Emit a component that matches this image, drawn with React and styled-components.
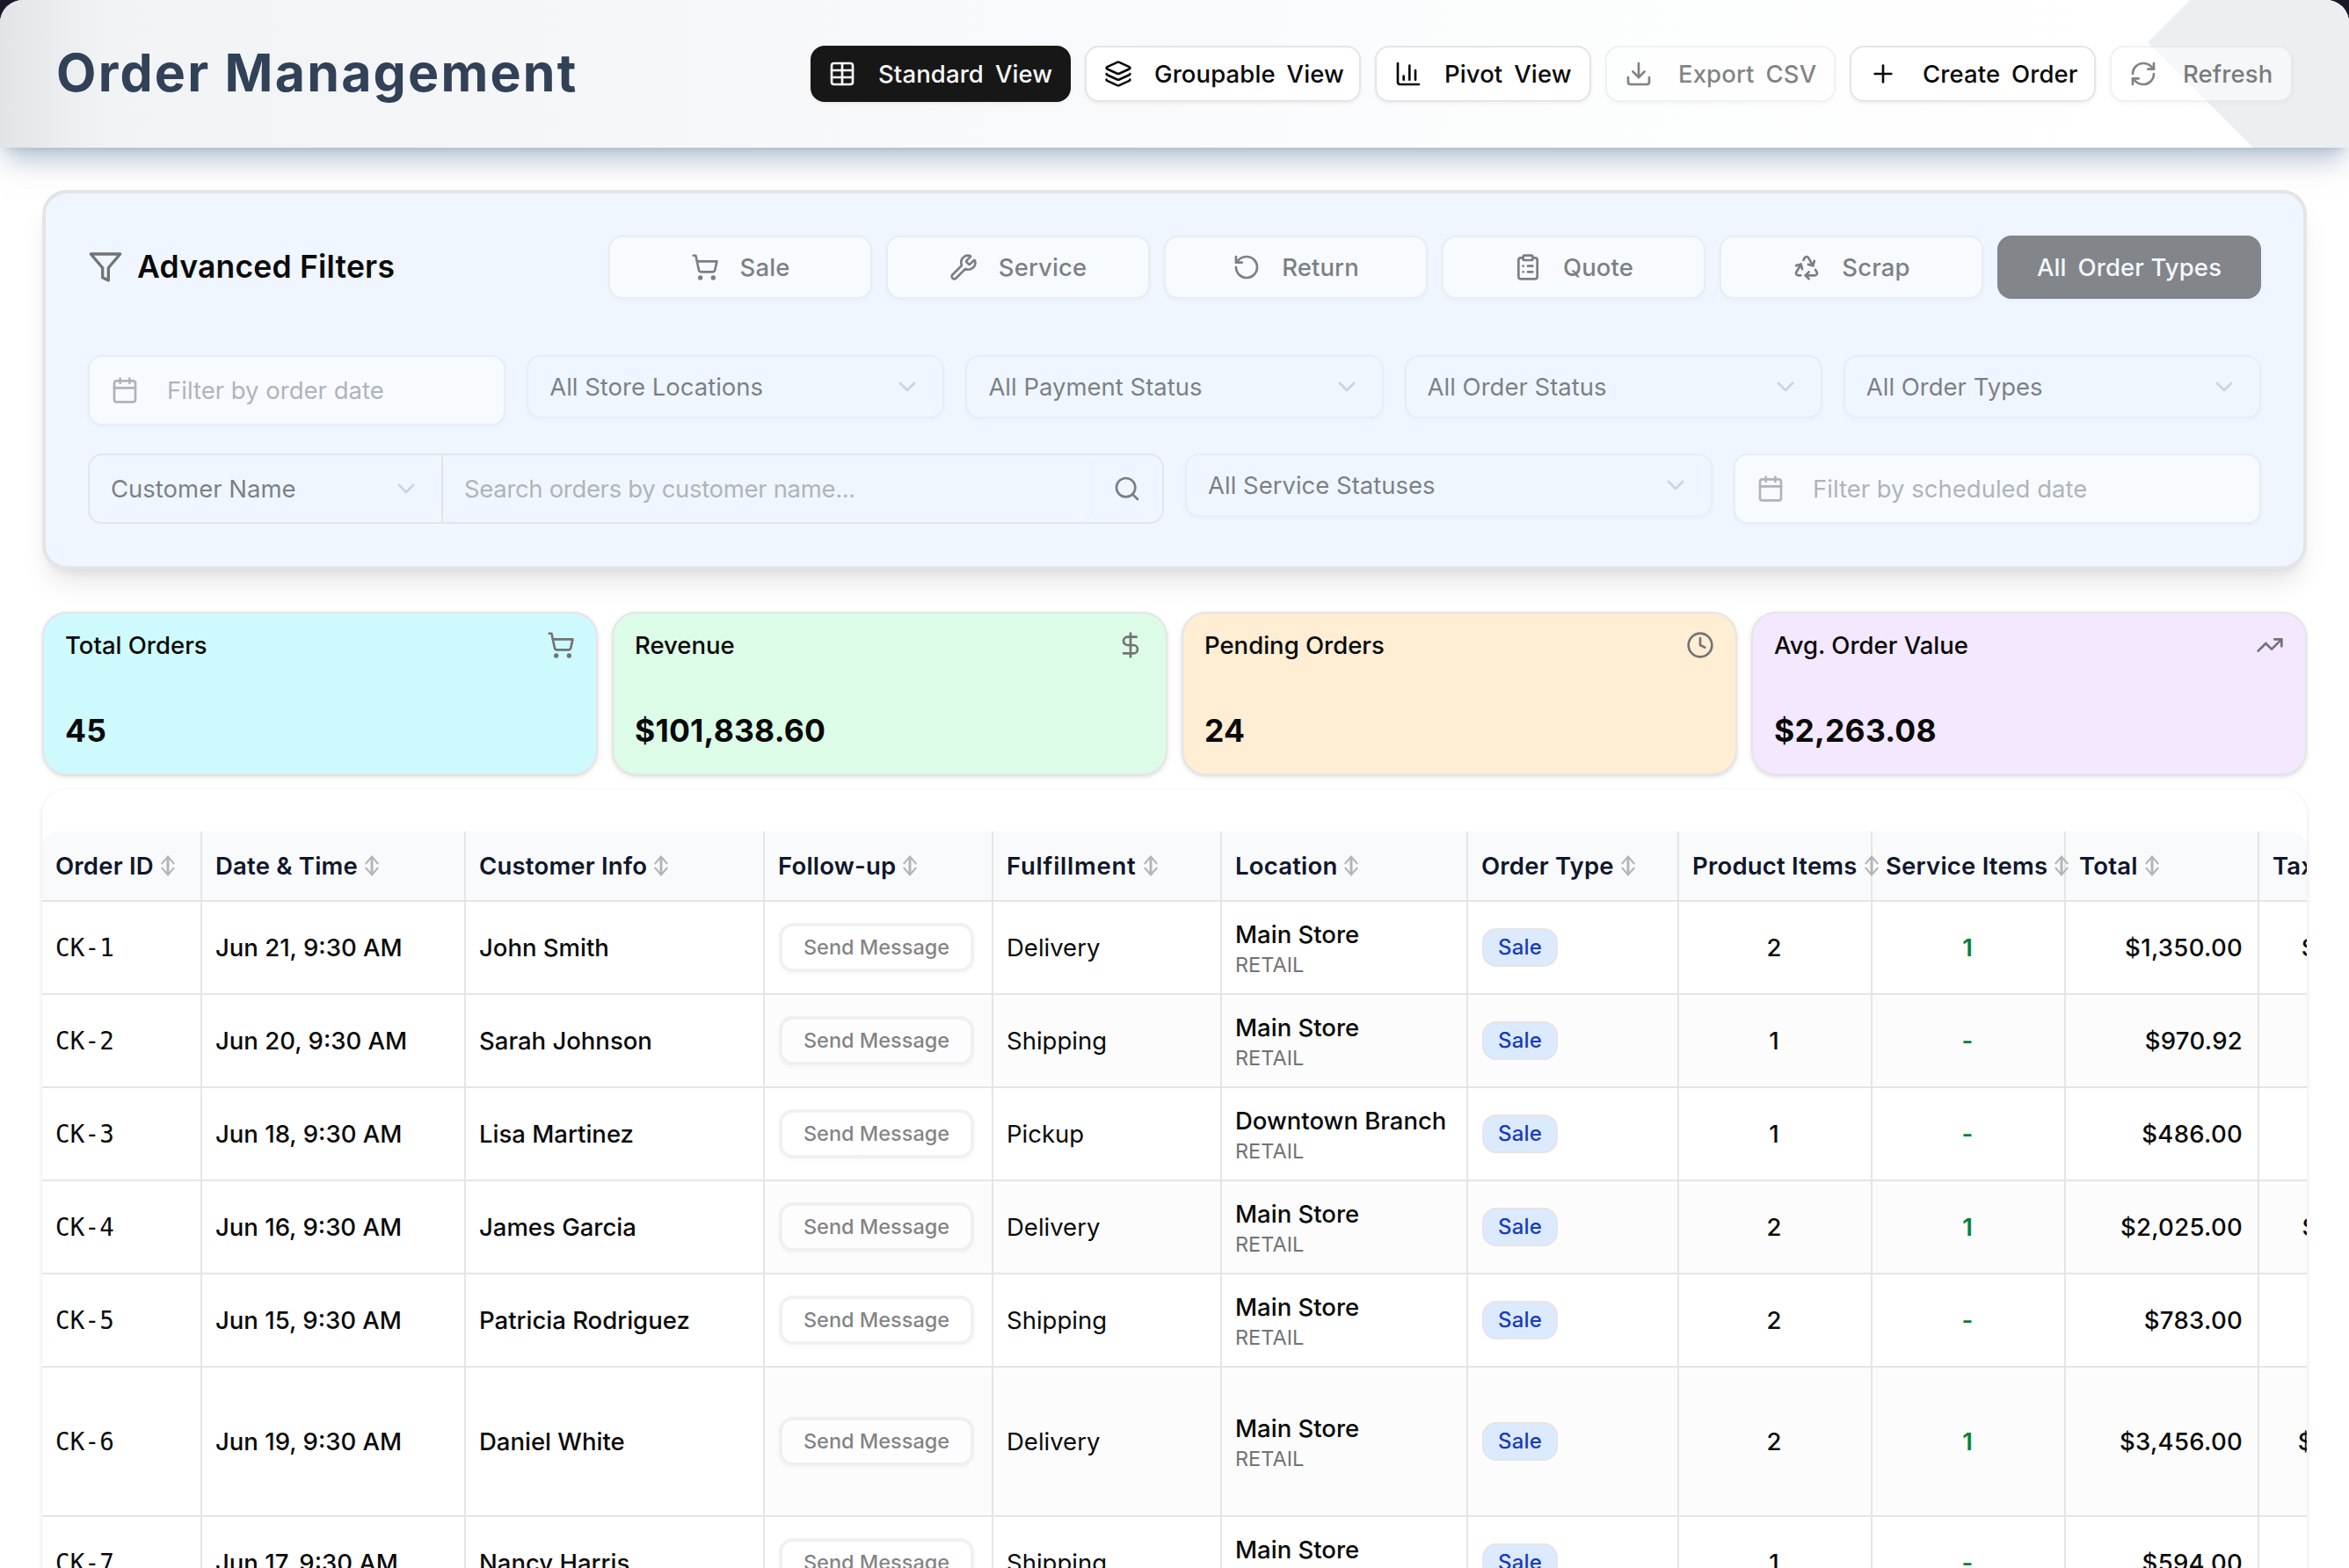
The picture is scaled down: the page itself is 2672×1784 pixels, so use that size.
import React from "react";
import styled, {createGlobalStyle, css} from "styled-components";
import {
    Table, Layers, ChartColumn, Download, Plus, RefreshCw, ShoppingCart, Wrench, RotateCcw,
    ClipboardList, Recycle, Calendar, ChevronDown, Search, DollarSign, Clock, TrendingUp
} from "lucide-react";

const viewButtons = [
    {label: 'Standard View', icon: Table, width: 296, gap: 25, active: true},
    {label: 'Groupable View', icon: Layers, width: 314, gap: 25},
    {label: 'Pivot View', icon: ChartColumn, width: 246, gap: 25},
    {label: 'Export CSV', icon: Download, width: 262, gap: 29, disabled: true},
    {label: 'Create Order', icon: Plus, width: 280, gap: 29},
    {label: 'Refresh', icon: RefreshCw, width: 208, gap: 29, disabled: true},
]

const orderTypes = [
    {label: 'Sale', icon: ShoppingCart},
    {label: 'Service', icon: Wrench},
    {label: 'Return', icon: RotateCcw},
    {label: 'Quote', icon: ClipboardList},
    {label: 'Scrap', icon: Recycle},
]

const selects = ['All Store Locations', 'All Payment Status', 'All Order Status', 'All Order Types']

const stats = [
    {label: 'Total Orders', value: '45', icon: ShoppingCart, color: '#cefafe'},
    {label: 'Revenue', value: '$101,838.60', icon: DollarSign, color: '#dcfce7'},
    {label: 'Pending Orders', value: '24', icon: Clock, color: '#ffedd4'},
    {label: 'Avg. Order Value', value: '$2,263.08', icon: TrendingUp, color: '#f3e8ff'},
]

const columns = [
    {name: 'Order ID'},
    {name: 'Date & Time'},
    {name: 'Customer Info'},
    {name: 'Follow-up'},
    {name: 'Fulfillment', tracking: 0.75},
    {name: 'Location'},
    {name: 'Order Type'},
    {name: 'Product Items'},
    {name: 'Service Items'},
    {name: 'Total'},
    {name: 'Tax'},
]

const orders = [
    {id: 'CK-1', date: 'Jun 21, 9:30 AM', customer: 'John Smith', fulfillment: 'Delivery', store: 'Main Store', products: 2, services: 1, total: '$1,350.00', tax: '$100.00'},
    {id: 'CK-2', date: 'Jun 20, 9:30 AM', customer: 'Sarah Johnson', fulfillment: 'Shipping', store: 'Main Store', products: 1, services: '-', total: '$970.92', tax: '$71.92'},
    {id: 'CK-3', date: 'Jun 18, 9:30 AM', customer: 'Lisa Martinez', fulfillment: 'Pickup', store: 'Downtown Branch', products: 1, services: '-', total: '$486.00', tax: '$36.00'},
    {id: 'CK-4', date: 'Jun 16, 9:30 AM', customer: 'James Garcia', fulfillment: 'Delivery', store: 'Main Store', products: 2, services: 1, total: '$2,025.00', tax: '$150.00'},
    {id: 'CK-5', date: 'Jun 15, 9:30 AM', customer: 'Patricia Rodriguez', fulfillment: 'Shipping', store: 'Main Store', products: 2, services: '-', total: '$783.00', tax: '$58.00'},
    {id: 'CK-6', date: 'Jun 19, 9:30 AM', customer: 'Daniel White', fulfillment: 'Delivery', store: 'Main Store', products: 2, services: 1, total: '$3,456.00', tax: '$256.00', tall: true},
    {id: 'CK-7', date: 'Jun 17, 9:30 AM', customer: 'Nancy Harris', fulfillment: 'Shipping', store: 'Main Store', products: 1, services: '-', total: '$594.00', tax: '$44.00'},
]

function FunnelIcon() {
    return (
        <svg width="40" height="40" viewBox="0 0 24 24" fill="none" stroke="#737373" strokeWidth="2"
             strokeLinecap="round" strokeLinejoin="round">
            <polygon points="22 3 2 3 10 12.46 10 19 14 21 14 12.46 22 3"/>
        </svg>
    )
}

function SortIcon() {
    return (
        <svg width="16" height="24" viewBox="0 0 16 24" fill="none" stroke="#b4b5b6">
            <path d="M8 2V22" strokeWidth="3"/>
            <path d="M0.8 10L8 1.6L15.2 10M0.8 14L8 22.4L15.2 14" strokeWidth="2"/>
        </svg>
    )
}

function DateFilter({label}) {
    return (
        <DateButton>
            <Calendar size={32}/>
            <span>{label}</span>
        </DateButton>
    )
}

function SelectFilter({label}) {
    return (
        <Select>
            <span>{label}</span>
            <ChevronDown size={32}/>
        </Select>
    )
}

export default function App() {
    return (
        <Page>
            <GlobalStyle/>
            <Window>
                <Header>
                    <h1>Order Management</h1>
                    <Toolbar>
                        {viewButtons.map(({label, icon: Icon, width, gap, active, disabled}) => (
                            <ViewButton key={label} $width={width} $gap={gap} $active={active} disabled={disabled}>
                                <Icon size={32}/>
                                <span>{label}</span>
                            </ViewButton>
                        ))}
                    </Toolbar>
                </Header>
                <Content>
                    <Filters>
                        <FiltersTop>
                            <FiltersTitle>
                                <FunnelIcon/>
                                <h2>Advanced Filters</h2>
                            </FiltersTitle>
                            <TypeButtons>
                                {orderTypes.map(({label, icon: Icon}) => (
                                    <TypeButton key={label}>
                                        <Icon size={32}/>
                                        <span>{label}</span>
                                    </TypeButton>
                                ))}
                                <TypeButton $active>
                                    <AllTypes><span>All</span><span>Order Types</span></AllTypes>
                                </TypeButton>
                            </TypeButtons>
                        </FiltersTop>
                        <FilterGrid $columns={5}>
                            <DateFilter label="Filter by order date"/>
                            {selects.map(label => <SelectFilter key={label} label={label}/>)}
                        </FilterGrid>
                        <FilterGrid $columns={4}>
                            <SearchGroup>
                                <SearchField>
                                    <span>Customer Name</span>
                                    <ChevronDown size={32}/>
                                </SearchField>
                                <SearchInput>Search orders by customer name...</SearchInput>
                                <SearchButton><Search size={32}/></SearchButton>
                            </SearchGroup>
                            <SelectFilter label="All Service Statuses"/>
                            <DateFilter label="Filter by scheduled date"/>
                        </FilterGrid>
                    </Filters>

                    <Stats>
                        {stats.map(({label, value, icon: Icon, color}) => (
                            <StatCard key={label} $color={color}>
                                <div>
                                    <h4>{label}</h4>
                                    <Icon size={32}/>
                                </div>
                                <p>{value}</p>
                            </StatCard>
                        ))}
                    </Stats>

                    <TableCard>
                        <TableScroll>
                            <HeadRow>
                                {columns.map(({name, tracking}) => (
                                    <HeadCell key={name} $tracking={tracking}>
                                        <span>{name}</span>
                                        <SortIcon/>
                                    </HeadCell>
                                ))}
                            </HeadRow>
                            {orders.map((order, i) => (
                                <Row key={order.id} $striped={i % 2 === 1} $tall={order.tall}>
                                    <Cell $pinned><OrderId>{order.id}</OrderId></Cell>
                                    <Cell $pinned $medium>{order.date}</Cell>
                                    <Cell $pinned $medium>{order.customer}</Cell>
                                    <Cell><MessageButton>Send Message</MessageButton></Cell>
                                    <Cell>{order.fulfillment}</Cell>
                                    <Cell>
                                        <Location>
                                            <h5>{order.store}</h5>
                                            <p>RETAIL</p>
                                        </Location>
                                    </Cell>
                                    <Cell><Badge>Sale</Badge></Cell>
                                    <Cell $medium $align="center">{order.products}</Cell>
                                    <ServiceCell $align="center">{order.services}</ServiceCell>
                                    <AmountCell $medium $align="flex-end">{order.total}</AmountCell>
                                    <AmountCell $medium $align="flex-end">{order.tax}</AmountCell>
                                </Row>
                            ))}
                        </TableScroll>
                    </TableCard>
                </Content>
            </Window>
        </Page>
    );
}

const colors = {
    text: '#0a0a0a', muted: '#737373', border: '#e5e5e5', slate: '#314158', blue: '#eff6ff',
}

const GlobalStyle = createGlobalStyle`
  * {
    box-sizing: border-box;
  }

  body {
    margin: 0;
    background: #1a1828;
  }

  h1, h2, h4, h5, p {
    margin: 0;
  }

  button {
    font: inherit;
    letter-spacing: inherit;
    color: inherit;
    padding: 0;
  }

  svg {
    flex-shrink: 0;
  }
`

const Page = styled.div`
  height: 1784px;
  overflow: hidden;
  font-family: Inter, "Liberation Sans", sans-serif;
  font-size: 27.5px;
  line-height: 40px;
  letter-spacing: 0;
  color: ${colors.text};
  white-space: nowrap;
`

const Window = styled.div`
  height: 100%;
  background: #fff;
  border-radius: 26px 26px 0 0;
  overflow: hidden;
`

const Header = styled.header`
  position: relative;
  height: 168px;
  padding: 0 64px;
  display: flex;
  justify-content: space-between;
  align-items: center;
  background: linear-gradient(90deg, #e3e4e8 0, #f2f3f5 120px, #f7f8fa 900px, #fcfdfd 1772px, #fff 100%);
  box-shadow: 0 20px 30px -6px rgba(144, 161, 185, 0.62), 0 8px 12px -8px rgba(144, 161, 185, 0.62);

  /* faceted shape behind the last button */
  &:before {
    content: "";
    position: absolute;
    top: 0;
    right: 0;
    width: 229px;
    height: 168px;
    background: #ebeff2;
    clip-path: polygon(48px 0, 100% 0, 100% 100%, 120px 100%, 0 48px);
  }

  h1 {
    padding-bottom: 2px;
    font-size: 59px;
    line-height: 72px;
    font-weight: 700;
    letter-spacing: 2.2px;
    color: ${colors.slate};
  }
`

const Toolbar = styled.div`
  position: relative;
  display: flex;
  gap: 16px;
`

const buttonBase = css`
  display: flex;
  align-items: center;
  border: 2px solid ${colors.border};
  border-radius: 16px;
  background: #fff;
  box-shadow: 0 2px 4px rgba(0, 0, 0, 0.05);
`

const ViewButton = styled.button`
  ${buttonBase}
  width: ${props => props.$width}px;
  height: 64px;
  padding-left: ${props => props.$active ? 18 : 20}px;
  gap: ${props => props.$gap}px;
  font-weight: 500;
  letter-spacing: 0.1px;
  word-spacing: 0.2em;

  &:disabled {
    opacity: 0.5;
  }

  ${props => props.$active && css`
    background: #171717;
    border-color: #171717;
    color: #fafafa;
  `}
`

const Content = styled.main`
  padding: 48px 48px 0;
  display: flex;
  flex-direction: column;
`

const Filters = styled.section`
  border: 4px solid ${colors.border};
  border-radius: 28px;
  padding: 48px;
  background: ${colors.blue};
  box-shadow: 0 20px 30px -6px rgba(0, 0, 0, 0.1), 0 8px 12px -8px rgba(0, 0, 0, 0.1);
  display: flex;
  flex-direction: column;
  gap: 32px;
`

const FiltersTop = styled.div`
  display: flex;
  justify-content: space-between;
  align-items: center;
  margin-bottom: 32px;
`

const FiltersTitle = styled.div`
  display: flex;
  align-items: center;
  gap: 16px;

  h2 {
    font-size: 35.5px;
    font-weight: 600;
    letter-spacing: 0.2px;
  }
`

const TypeButtons = styled.div`
  display: flex;
  gap: 16px;
`

const TypeButton = styled.button`
  ${buttonBase}
  width: 300px;
  height: 72px;
  justify-content: center;
  gap: 24px;
  font-weight: 500;
  letter-spacing: 0.1px;
  opacity: 0.5;

  ${props => props.$active && css`
    background: #171717;
    border-color: #171717;
    color: #fafafa;
  `}
`

const AllTypes = styled.span`
  display: flex;
  gap: 13px;
`

const FilterGrid = styled.div`
  display: grid;
  grid-template-columns: repeat(${props => props.$columns}, 1fr);
  align-items: start;
  gap: 24px;
`

const DateButton = styled.button`
  ${buttonBase}
  height: 80px;
  padding: 0 24px;
  gap: 32px;
  color: ${colors.muted};
  opacity: 0.5;
`

const Select = styled.button`
  ${buttonBase}
  height: 72px;
  padding: 0 24px;
  justify-content: space-between;
  background: transparent;
  opacity: 0.5;

  svg {
    color: ${colors.muted};
    opacity: 0.5;
  }
`

const SearchGroup = styled.div`
  grid-column: span 2;
  height: 80px;
  display: flex;
  border: 2px solid ${colors.border};
  border-radius: 16px;
  overflow: hidden;
`

const SearchField = styled.div`
  width: 402px;
  padding: 0 24px;
  border-right: 2px solid ${colors.border};
  display: flex;
  align-items: center;
  justify-content: space-between;

  span {
    opacity: 0.5;
  }

  svg {
    color: ${colors.muted};
    opacity: 0.25;
  }
`

const SearchInput = styled.div`
  flex: 1;
  padding: 0 24px;
  display: flex;
  align-items: center;
  border-radius: 16px;
  box-shadow: 0 2px 4px rgba(0, 0, 0, 0.05);
  letter-spacing: -0.012em;
  color: ${colors.muted};
  opacity: 0.5;
`

const SearchButton = styled.div`
  width: 80px;
  display: flex;
  align-items: center;
  justify-content: center;
  opacity: 0.5;
`

const Stats = styled.section`
  margin-top: 48px;
  display: grid;
  grid-template-columns: repeat(4, 1fr);
  gap: 16px;
`

const StatCard = styled.div`
  height: 186px;
  padding: 16px 24px 0;
  border: 2px solid ${colors.border};
  border-radius: 28px;
  background: ${props => props.$color};
  box-shadow: 0 2px 6px rgba(0, 0, 0, 0.1), 0 2px 4px -2px rgba(0, 0, 0, 0.1);

  div {
    display: flex;
    justify-content: space-between;
    align-items: center;
  }

  h4 {
    font-size: 27.5px;
    font-weight: 500;
  }

  svg {
    color: ${colors.muted};
  }

  p {
    margin-top: 58px;
    font-size: 35.5px;
    font-weight: 700;
    letter-spacing: 0.2px;
  }
`

const TableCard = styled.section`
  margin-top: 16px;
  height: 960px;
  padding-top: 48px;
  border-radius: 28px;
  background: #fff;
  box-shadow: 0 2px 6px rgba(0, 0, 0, 0.1), 0 2px 4px -2px rgba(0, 0, 0, 0.1);
`

const TableScroll = styled.div`
  height: 912px;
  border-radius: 20px 20px 0 0;
  overflow: hidden;
`

const tableGrid = css`
  display: grid;
  grid-template-columns: 182px 300px 340px 260px 260px 280px 240px 220px 220px 220px 176px;
  width: 2698px;
`

const HeadRow = styled.div`
  ${tableGrid}
  height: 80px;
  background: #f9fafc;
`

const HeadCell = styled.div`
  display: flex;
  align-items: center;
  gap: 8px;
  padding: 0 0 1px 15px;
  border-right: 2px solid ${colors.border};
  border-bottom: 2px solid ${colors.border};
  font-weight: 600;
  letter-spacing: ${props => props.$tracking || 0.2}px;
  color: #0f172b;

  /* long names push the arrow over the column line */
  svg {
    position: relative;
    z-index: 1;
  }
`

const Row = styled.div`
  ${tableGrid}
  height: ${props => props.$tall ? 170 : 106}px;
  background: ${props => props.$striped ? '#fcfcfc' : '#fff'};
`

const Cell = styled.div`
  display: flex;
  align-items: center;
  justify-content: ${props => props.$align || 'flex-start'};
  padding: 0 17px 0 15px;
  border-right: 2px solid ${colors.border};
  border-bottom: 2px solid ${colors.border};
  font-weight: ${props => props.$medium ? 500 : 400};
  ${props => props.$pinned && 'background: #fff;'}
`

const ServiceCell = styled(Cell)`
  font-weight: 600;
  color: #008236;
`

const AmountCell = styled(Cell)`
  letter-spacing: 0.3px;
`

const OrderId = styled.span`
  font-family: "DejaVu Sans Mono", monospace;
  font-size: 27.5px;
  letter-spacing: 0.2px;
`

const MessageButton = styled.button`
  width: 222px;
  height: 56px;
  margin-left: 1px;
  border: 4px solid ${colors.border};
  border-radius: 16px;
  background: #fff;
  box-shadow: 0 2px 4px rgba(0, 0, 0, 0.05);
  font-size: 23.5px;
  font-weight: 500;
  opacity: 0.5;
`

const Location = styled.div`
  padding-top: 3px;

  h5 {
    font-size: 27.5px;
    font-weight: 500;
    line-height: 36px;
  }

  p {
    font-size: 23.5px;
    line-height: 34px;
    color: ${colors.muted};
  }
`

const Badge = styled.span`
  height: 44px;
  margin-left: 1px;
  padding: 0 16px;
  display: flex;
  align-items: center;
  border: 2px solid ${colors.border};
  border-radius: 16px;
  background: #dbeafe;
  color: #193cb8;
  font-size: 24px;
  font-weight: 500;
  letter-spacing: 0.2px;
`
